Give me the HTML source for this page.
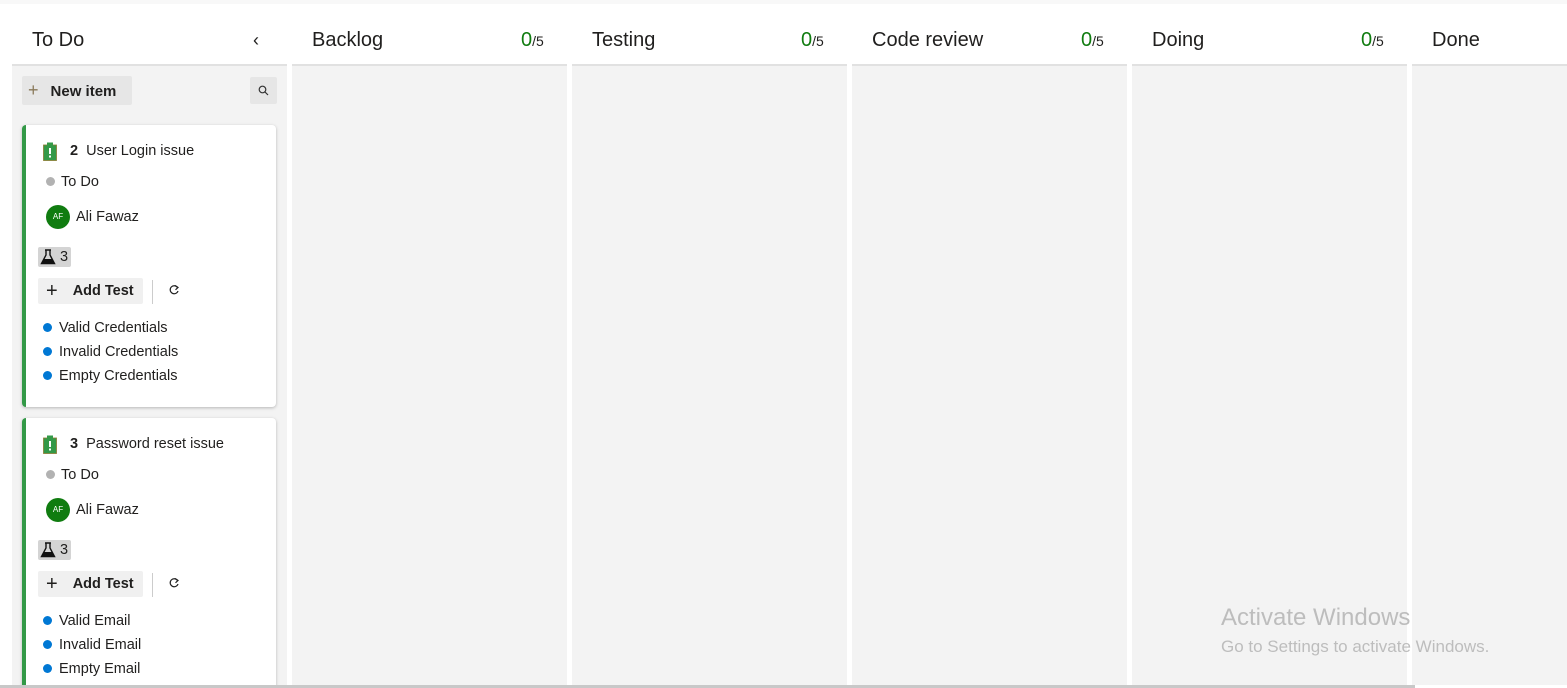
<!DOCTYPE html>
<html><head><style>
*{box-sizing:border-box;margin:0;padding:0}
body{width:1567px;height:688px;overflow:hidden;background:#fff;font-family:"Segoe UI","Liberation Sans",sans-serif;color:#201f1e;position:relative}
.a{position:absolute}
.top{left:0;top:0;width:1567px;height:4px;background:#f8f8f8}
.hd{top:28px;font-size:20px;line-height:24px;color:#201f1e}
.cnt{top:28px;font-size:20px;line-height:24px;color:#107c10}
.cnt span{font-size:14px;color:#201f1e}
.line{top:64px;height:2px;background:#e1e1e1}
.col{top:66px;height:619px;background:#f3f3f3}
.clip{left:12px;top:110px;width:275px;height:575px;overflow:hidden}
.card{left:10px;width:254px;background:#fff;border-radius:4px;box-shadow:0 1px 3px rgba(0,0,0,.25);border-left:4px solid #339947}
.card .a{font-size:14.5px;line-height:18px}
.dot{display:inline-block;width:9px;height:9px;border-radius:50%}
</style></head><body>
<div class="a top"></div>
<div class="a hd" style="left:32px">To Do</div>
<div class="a" style="left:253px;top:28px;font-size:18px;line-height:24px">&#8249;</div>
<div class="a hd" style="left:312px">Backlog</div><div class="a cnt" style="left:521px">0<span>/5</span></div>
<div class="a hd" style="left:592px">Testing</div><div class="a cnt" style="left:801px">0<span>/5</span></div>
<div class="a hd" style="left:872px">Code review</div><div class="a cnt" style="left:1081px">0<span>/5</span></div>
<div class="a hd" style="left:1152px">Doing</div><div class="a cnt" style="left:1361px">0<span>/5</span></div>
<div class="a hd" style="left:1432px">Done</div>

<div class="a line" style="left:12px;width:275px"></div><div class="a col" style="left:12px;width:275px"></div>
<div class="a line" style="left:292px;width:275px"></div><div class="a col" style="left:292px;width:275px"></div>
<div class="a line" style="left:572px;width:275px"></div><div class="a col" style="left:572px;width:275px"></div>
<div class="a line" style="left:852px;width:275px"></div><div class="a col" style="left:852px;width:275px"></div>
<div class="a line" style="left:1132px;width:275px"></div><div class="a col" style="left:1132px;width:275px"></div>
<div class="a line" style="left:1412px;width:155px"></div><div class="a col" style="left:1412px;width:155px"></div>

<div class="a" style="left:22px;top:76px;width:110px;height:29px;background:#e6e6e6;border-radius:2px;font-size:15px;font-weight:600;line-height:29px"><span style="color:#8a7a5a;font-weight:400;font-size:18px;margin:0 12px 0 6px">+</span>New item</div>
<div class="a" style="left:250px;top:77px;width:27px;height:27px;background:#e6e6e6;border-radius:2px"><svg width="27" height="27"><circle cx="12.5" cy="12.5" r="3.3" fill="none" stroke="#333" stroke-width="1.2"/><line x1="15" y1="15" x2="18" y2="18" stroke="#333" stroke-width="1.2"/></svg></div>

<div class="a clip">
<div class="a card" style="top:15px;height:282px">
 <svg class="a" style="left:17px;top:17px" width="14" height="19"><rect x="0.5" y="3" width="13" height="15.5" fill="#339947" stroke="#8a7a30" stroke-width="0.8"/><rect x="4" y="0.5" width="6" height="3" fill="#339947"/><rect x="6" y="6" width="2" height="6" fill="#fff"/><rect x="6" y="13.5" width="2" height="2" fill="#fff"/></svg>
 <div class="a" style="left:44px;top:17px"><b>2</b>&nbsp;&nbsp;User Login issue</div>
 <div class="a" style="left:20px;top:48px"><span class="dot" style="background:#b2b2b2;margin-right:6px"></span>To Do</div>
 <div class="a" style="left:20px;top:80px;width:24px;height:24px;border-radius:50%;background:#107c10;color:#fff;font-size:8px;line-height:24px;text-align:center">AF</div>
 <div class="a" style="left:50px;top:83px">Ali Fawaz</div>
 <div class="a" style="left:12px;top:122px;width:33px;height:20px;background:#d4d4d4;border-radius:2px"><svg class="a" style="left:2px;top:2px" width="16" height="16"><path d="M5 1h6M6 1v5L1.5 14.5h13L10 6V1" fill="none" stroke="#111" stroke-width="1.4"/><path d="M3.5 10h9l2 4.5h-13z" fill="#111"/></svg><span class="a" style="left:22px;top:1px">3</span></div>
 <div class="a" style="left:12px;top:153px;width:105px;height:26px;background:#f0f0f0;border-radius:2px;font-weight:600;line-height:26px"><span style="font-weight:300;font-size:20px;margin:0 15px 0 8px;vertical-align:-2px">+</span>Add Test</div>
 <div class="a" style="left:126px;top:155px;width:1px;height:24px;background:#ccc"></div>
 <svg class="a" style="left:142px;top:159px" width="12" height="12"><path d="M9.5 3.5A4 4 0 1 0 10 7" fill="none" stroke="#222" stroke-width="1.2"/><path d="M7 1.5L10 3.5 7.5 5.8" fill="none" stroke="#222" stroke-width="1.2"/></svg>
 <div class="a" style="left:17px;top:194px"><span class="dot" style="background:#0078d4;margin-right:7px"></span>Valid Credentials</div>
 <div class="a" style="left:17px;top:218px"><span class="dot" style="background:#0078d4;margin-right:7px"></span>Invalid Credentials</div>
 <div class="a" style="left:17px;top:242px"><span class="dot" style="background:#0078d4;margin-right:7px"></span>Empty Credentials</div>
</div>

<div class="a card" style="top:308px;height:282px">
 <svg class="a" style="left:17px;top:17px" width="14" height="19"><rect x="0.5" y="3" width="13" height="15.5" fill="#339947" stroke="#8a7a30" stroke-width="0.8"/><rect x="4" y="0.5" width="6" height="3" fill="#339947"/><rect x="6" y="6" width="2" height="6" fill="#fff"/><rect x="6" y="13.5" width="2" height="2" fill="#fff"/></svg>
 <div class="a" style="left:44px;top:17px"><b>3</b>&nbsp;&nbsp;Password reset issue</div>
 <div class="a" style="left:20px;top:48px"><span class="dot" style="background:#b2b2b2;margin-right:6px"></span>To Do</div>
 <div class="a" style="left:20px;top:80px;width:24px;height:24px;border-radius:50%;background:#107c10;color:#fff;font-size:8px;line-height:24px;text-align:center">AF</div>
 <div class="a" style="left:50px;top:83px">Ali Fawaz</div>
 <div class="a" style="left:12px;top:122px;width:33px;height:20px;background:#d4d4d4;border-radius:2px"><svg class="a" style="left:2px;top:2px" width="16" height="16"><path d="M5 1h6M6 1v5L1.5 14.5h13L10 6V1" fill="none" stroke="#111" stroke-width="1.4"/><path d="M3.5 10h9l2 4.5h-13z" fill="#111"/></svg><span class="a" style="left:22px;top:1px">3</span></div>
 <div class="a" style="left:12px;top:153px;width:105px;height:26px;background:#f0f0f0;border-radius:2px;font-weight:600;line-height:26px"><span style="font-weight:300;font-size:20px;margin:0 15px 0 8px;vertical-align:-2px">+</span>Add Test</div>
 <div class="a" style="left:126px;top:155px;width:1px;height:24px;background:#ccc"></div>
 <svg class="a" style="left:142px;top:159px" width="12" height="12"><path d="M9.5 3.5A4 4 0 1 0 10 7" fill="none" stroke="#222" stroke-width="1.2"/><path d="M7 1.5L10 3.5 7.5 5.8" fill="none" stroke="#222" stroke-width="1.2"/></svg>
 <div class="a" style="left:17px;top:194px"><span class="dot" style="background:#0078d4;margin-right:7px"></span>Valid Email</div>
 <div class="a" style="left:17px;top:218px"><span class="dot" style="background:#0078d4;margin-right:7px"></span>Invalid Email</div>
 <div class="a" style="left:17px;top:242px"><span class="dot" style="background:#0078d4;margin-right:7px"></span>Empty Email</div>
</div>
</div>
<div class="a" style="left:0;top:685px;width:1415px;height:3px;background:#c8c8c8"></div>

<div class="a" style="left:1221px;top:603px;font-size:24px;line-height:30px;color:#bdbdbd">Activate Windows</div>
<div class="a" style="left:1221px;top:636px;font-size:17px;line-height:22px;color:#bdbdbd">Go to Settings to activate Windows.</div>
</body></html>
